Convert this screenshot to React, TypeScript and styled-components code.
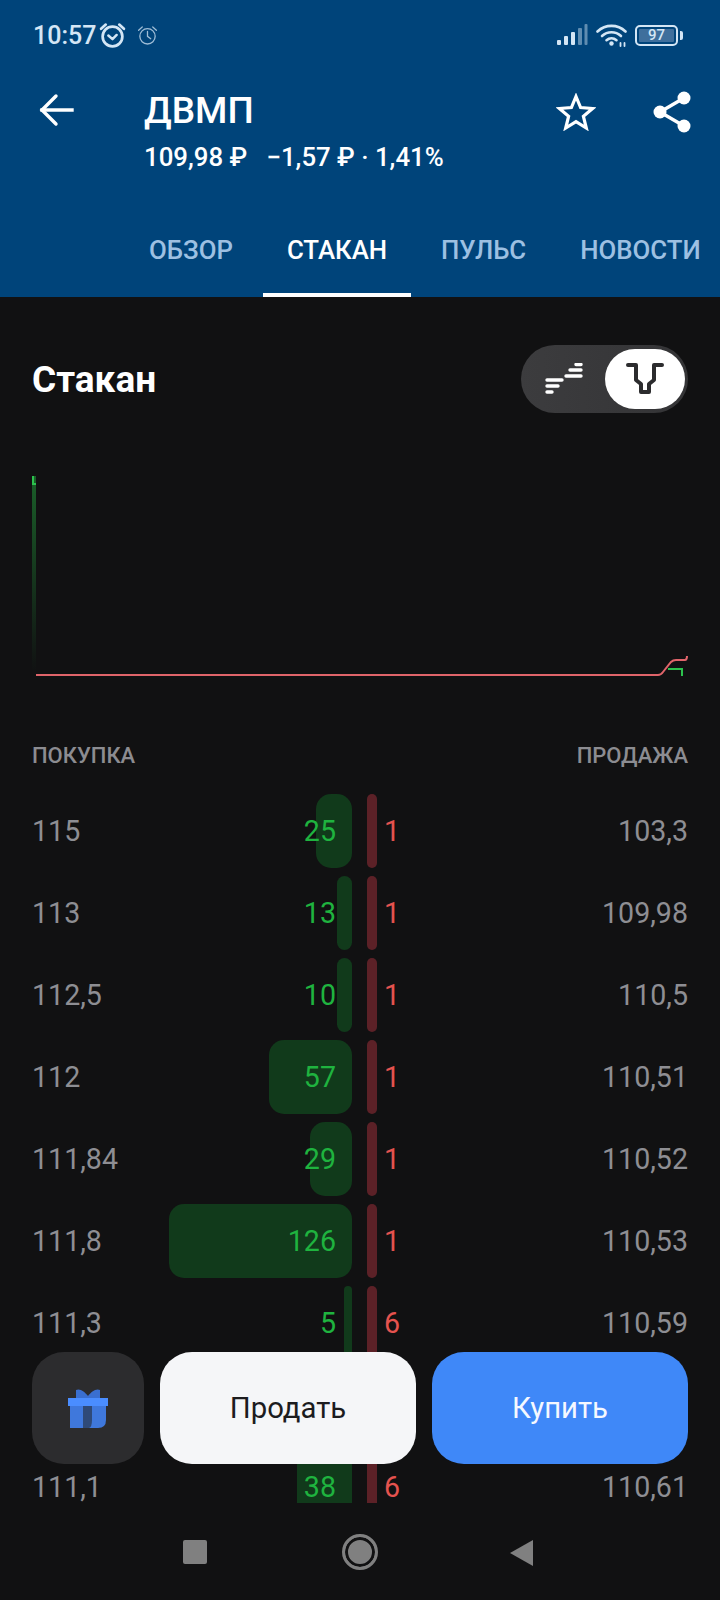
import React from "react";
import styled, { createGlobalStyle } from "styled-components";

const GlobalStyle = createGlobalStyle`
  html, body {
    margin: 0;
    padding: 0;
    background: #111112;
    font-family: "Roboto", "Liberation Sans", sans-serif;
  }
  * { box-sizing: border-box; }
`;

const Screen = styled.div`
  width: 720px;
  height: 1600px;
  display: flex;
  flex-direction: column;
  overflow: hidden;
  background: #111112;
`;

const Header = styled.header`
  height: 297px;
  flex: none;
  background: #00447a;
  display: flex;
  flex-direction: column;
`;

const StatusBar = styled.div`
  height: 70px;
  padding: 0 38px 0 33px;
  display: flex;
  align-items: center;
  color: #d4e6f5;
`;

const Clock = styled.span`
  font-size: 25px;
  font-weight: 500;
  margin-right: 3px;
`;

const AlarmGap = styled.span`
  width: 11px;
`;

const StatusRight = styled.div`
  margin-left: auto;
  display: flex;
  align-items: center;
  gap: 8px;
`;

const TitleBar = styled.div`
  height: 90px;
  display: flex;
  align-items: flex-start;
  color: #fff;
`;

const BackSlot = styled.div`
  width: 144px;
  padding: 23px 0 0 39px;
  flex: none;
`;

const TitleBlock = styled.div`
  flex: 1;
  padding-top: 19px;
`;

const Title = styled.div`
  font-size: 37px;
  font-weight: 500;
  line-height: 44px;
`;

const Subtitle = styled.div`
  font-size: 25.8px;
  font-weight: 500;
  line-height: 30px;
  margin-top: 9px;
  white-space: pre;
`;

const Actions = styled.div`
  display: flex;
  align-items: center;
  gap: 57px;
  padding: 21px 29px 0 0;
`;

const Tabs = styled.nav`
  margin-top: auto;
  height: 72px;
  padding-left: 125px;
  display: flex;
  gap: 6px;
`;

const Tab = styled.div<{ $active?: boolean }>`
  padding: 0 24px 19px;
  display: flex;
  align-items: center;
  font-size: 25.8px;
  font-weight: 500;
  white-space: nowrap;
  color: ${({ $active }) => ($active ? "#fff" : "#9dc0e2")};
  border-bottom: 4px solid ${({ $active }) => ($active ? "#fff" : "transparent")};
`;

const Main = styled.main`
  height: 1206px;
  flex: none;
  overflow: hidden;
`;

const SectionHead = styled.div`
  height: 68px;
  margin-top: 48px;
  padding: 0 32px;
  display: flex;
  align-items: center;
  justify-content: space-between;
`;

const SectionTitle = styled.h2`
  margin: 0;
  font-size: 37px;
  font-weight: 700;
  color: #fff;
`;

const Toggle = styled.div`
  width: 167px;
  height: 68px;
  padding: 4px 3px 4px 0;
  border-radius: 34px;
  background: linear-gradient(90deg, #3c3c3e, #343436);
  display: flex;
  align-items: center;
  justify-content: space-between;
`;

const ToggleOff = styled.div`
  width: 84px;
  display: flex;
  justify-content: center;
  padding-left: 2px;
`;

const ToggleThumb = styled.div`
  width: 80px;
  height: 60px;
  border-radius: 30px;
  background: #fff;
  display: flex;
  align-items: center;
  justify-content: center;
`;

const ChartBox = styled.div`
  height: 240px;
  margin-top: 63px;
  svg { display: block; }
`;

const ColumnHeads = styled.div`
  margin-top: 27px;
  height: 24px;
  padding: 0 32px;
  display: flex;
  justify-content: space-between;
  align-items: center;
  font-size: 22px;
  font-weight: 500;
  color: #8c8c91;
`;

const Book = styled.div`
  margin-top: 27px;
  padding: 0 32px;
  display: flex;
  flex-direction: column;
  gap: 8px;
`;

const Row = styled.div`
  height: 74px;
  flex: none;
  display: grid;
  grid-template-columns: 320px 321px;
  column-gap: 15px;
  font-size: 28.6px;
`;

const BuySide = styled.div`
  position: relative;
  display: flex;
  align-items: center;
  justify-content: space-between;
  padding-right: 16px;
`;

const SellSide = styled.div`
  display: flex;
  align-items: center;
`;

const Price = styled.span`
  color: #8e8e93;
`;

const SellPrice = styled(Price)`
  margin-left: auto;
`;

const BuyQty = styled.span`
  position: relative;
  color: #1fb33f;
`;

const SellQty = styled.span`
  color: #e5534f;
  margin-left: 7px;
`;

const BuyBar = styled.div<{ $width: number }>`
  position: absolute;
  top: 0;
  bottom: 0;
  right: 0;
  width: ${({ $width }) => $width}px;
  border-radius: ${({ $width }) => Math.min($width / 2, 15)}px;
  background: #113a1b;
`;

const SellBar = styled.div`
  width: 10px;
  height: 100%;
  flex: none;
  border-radius: 5px;
  background: #5c2127;
`;

const TradeBar = styled.div`
  position: absolute;
  left: 32px;
  top: 1352px;
  width: 656px;
  height: 112px;
  display: grid;
  grid-template-columns: 112px 1fr 1fr;
  gap: 16px;
`;

const GiftButton = styled.div`
  border-radius: 32px;
  background: #2c2c2e;
  display: flex;
  align-items: center;
  justify-content: center;
`;

const TradeButton = styled.div<{ $buy?: boolean }>`
  border-radius: 32px;
  display: flex;
  align-items: center;
  justify-content: center;
  font-size: 29.3px;
  background: ${({ $buy }) => ($buy ? "#3f88f8" : "#f5f6f8")};
  color: ${({ $buy }) => ($buy ? "#f5f8ff" : "#1c1c1e")};
`;

const NavBar = styled.div`
  flex: 1;
  padding: 31px 0 0 183px;
  display: flex;
  align-items: flex-start;
`;

const NavSquare = styled.div`
  width: 24px;
  height: 24px;
  border-radius: 2px;
  background: #808080;
  margin-top: 6px;
`;

const NavHome = styled.div`
  width: 36px;
  height: 36px;
  margin: 0 0 0 135px;
  border-radius: 50%;
  background: #808080;
  border: 3px solid #808080;
  box-shadow: inset 0 0 0 3px #111112;
`;

const NavBack = styled.div`
  margin: 6px 0 0 132px;
  width: 0;
  height: 0;
  border-top: 13px solid transparent;
  border-bottom: 13px solid transparent;
  border-right: 23px solid #808080;
`;

// the eighth row sits behind the trade buttons, only its bars matter
const rows = [
  { id: 1, buy: "115", buyQty: 25, buyWidth: 36, sellQty: 1, sell: "103,3" },
  { id: 2, buy: "113", buyQty: 13, buyWidth: 15, sellQty: 1, sell: "109,98" },
  { id: 3, buy: "112,5", buyQty: 10, buyWidth: 15, sellQty: 1, sell: "110,5" },
  { id: 4, buy: "112", buyQty: 57, buyWidth: 83, sellQty: 1, sell: "110,51" },
  { id: 5, buy: "111,84", buyQty: 29, buyWidth: 42, sellQty: 1, sell: "110,52" },
  { id: 6, buy: "111,8", buyQty: 126, buyWidth: 183, sellQty: 1, sell: "110,53" },
  { id: 7, buy: "111,3", buyQty: 5, buyWidth: 8, sellQty: 6, sell: "110,59" },
  { id: 8, buyWidth: 8 },
  { id: 9, buy: "111,1", buyQty: 38, buyWidth: 55, sellQty: 6, sell: "110,61" },
];

const AlarmIcon = ({ size, dim }: { size: number; dim?: boolean }) => (
  <svg width={size} height={size} viewBox="0 0 26 26" fill="none" stroke="currentColor" opacity={dim ? 0.75 : 1}>
    <circle cx="13" cy="14" r="9.5" strokeWidth={dim ? 1.6 : 2.6} />
    <path d="M2 6.5 6.5 2.5M24 6.5 19.5 2.5" strokeWidth={dim ? 1.6 : 2.6} strokeLinecap="round" />
    {dim ? (
      <path d="M13 8v6l4 3" strokeWidth="1.6" strokeLinecap="round" />
    ) : (
      <path d="M9 13l4 3.5 4-4" strokeWidth="2.4" strokeLinecap="round" strokeLinejoin="round" />
    )}
  </svg>
);

const SignalIcon = () => (
  <svg width="31" height="22" viewBox="0 0 31 22" fill="#d4e6f5">
    <rect x="0" y="16" width="4" height="5" rx="1" />
    <rect x="7" y="12" width="4" height="9" rx="1" />
    <rect x="14" y="8" width="4" height="13" rx="1" />
    <rect x="21" y="4" width="4" height="17" rx="1" opacity="0.45" />
    <rect x="27.5" y="0" width="3" height="21" rx="1" opacity="0.45" />
  </svg>
);

const WifiIcon = () => (
  <svg width="31" height="24" viewBox="0 0 31 24" fill="none" stroke="#d4e6f5" strokeWidth="2.6" strokeLinecap="round">
    <path d="M1.5 8.5C9.5 1 21.5 1 29.5 8.5" />
    <path d="M6 13C11.5 8 19.5 8 25 13" />
    <path d="M10.5 17.2C13.5 14.6 17.5 14.6 20.5 17.2" />
    <circle cx="15.5" cy="20.5" r="2.2" fill="#d4e6f5" stroke="none" />
    <path d="M24.5 20v3M28.5 20v3" strokeWidth="1.8" />
  </svg>
);

const Battery = styled.div`
  position: relative;
  width: 43px;
  height: 21px;
  margin-right: 4px;
  padding: 2px;
  border: 2px solid #d4e6f5;
  border-radius: 5px;
  &::after {
    content: "";
    position: absolute;
    right: -7px;
    top: 4px;
    width: 3px;
    height: 9px;
    border-radius: 0 2px 2px 0;
    background: #d4e6f5;
  }
`;

const BatteryFill = styled.div`
  height: 100%;
  border-radius: 1px;
  background: #3f6f9c;
  color: #d4e6f5;
  font-size: 15px;
  font-weight: 500;
  line-height: 13px;
  text-align: center;
`;

const BackIcon = () => (
  <svg width="36" height="36" viewBox="0 0 36 36" fill="none" stroke="#fff" strokeWidth="3.4" strokeLinecap="square">
    <path d="M3 17h30" />
    <path d="M17 3 3 17l14 14" strokeLinecap="round" strokeLinejoin="miter" />
  </svg>
);

const StarIcon = () => (
  <svg width="40" height="38" viewBox="0 0 40 38" fill="none" stroke="#fff" strokeWidth="3.2" strokeLinejoin="miter">
    <path d="M20 3.5 24.6 14.6 36.6 15.5 27.4 23.3 30.3 35 20 28.7 9.7 35 12.6 23.3 3.4 15.5 15.4 14.6Z" />
  </svg>
);

const ShareIcon = () => (
  <svg width="38" height="42" viewBox="0 0 38 42" fill="#fff" stroke="#fff">
    <circle cx="7" cy="21" r="6.5" stroke="none" />
    <circle cx="31" cy="7" r="6.5" stroke="none" />
    <circle cx="31" cy="35" r="6.5" stroke="none" />
    <path d="M7 21 31 7M7 21l24 14" strokeWidth="3.4" />
  </svg>
);

const BarsIcon = () => (
  <svg width="38" height="32" viewBox="0 0 38 32" fill="none" stroke="#fff" strokeWidth="3.4" strokeLinecap="round">
    <path d="M2 17h15M2 23h11M2 29h5" />
    <path d="M21 13h15M25 7h11M31 1.5h5" />
  </svg>
);

const DepthIcon = () => (
  <svg width="38" height="34" viewBox="0 0 38 34" fill="none" stroke="#2c2c2e" strokeWidth="4" strokeLinecap="round" strokeLinejoin="round">
    <path d="M2 3h8v15l5 4v8h8v-8l5-4V3h8" />
  </svg>
);

const GiftIcon = () => (
  <svg width="40" height="42" viewBox="0 0 40 42">
    <path d="M8 3c4-2 9 2 12 6 3-4 8-8 12-6v9H8Z" fill="#3a6fd0" />
    <rect x="0" y="11" width="40" height="8" fill="#4a8dff" />
    <rect x="2" y="19" width="15" height="22" fill="#3f78dc" />
    <rect x="15" y="19" width="9" height="22" fill="#2f4a78" />
    <path d="M24 19h14v14q0 8-8 8h-9q3-1 3-8Z" fill="#3f78dc" />
  </svg>
);

const DepthChart = () => (
  <svg width="720" height="240" viewBox="0 0 720 240" fill="none">
    <defs>
      <linearGradient id="bidFade" x1="0" y1="0" x2="0" y2="1">
        <stop offset="0" stopColor="#1a5f29" />
        <stop offset="1" stopColor="#1a5f29" stopOpacity="0" />
      </linearGradient>
    </defs>
    <rect x="32" y="0" width="4" height="196" fill="url(#bidFade)" />
    <path d="M33 0v8h3" stroke="#2cc24d" strokeWidth="2" />
    <path d="M668 193h14v7" stroke="#2cc24d" strokeWidth="2" />
    <path d="M36 199H658q3 0 5-3l8-10q2-2 5-2h9q2 0 2-4" stroke="#e0646a" strokeWidth="2" />
  </svg>
);

export default function App() {
  return (
    <Screen>
      <GlobalStyle />
      <Header>
        <StatusBar>
          <Clock>10:57</Clock>
          <AlarmIcon size={27} />
          <AlarmGap />
          <AlarmIcon size={21} dim />
          <StatusRight>
            <SignalIcon />
            <WifiIcon />
            <Battery>
              <BatteryFill>97</BatteryFill>
            </Battery>
          </StatusRight>
        </StatusBar>
        <TitleBar>
          <BackSlot>
            <BackIcon />
          </BackSlot>
          <TitleBlock>
            <Title>ДВМП</Title>
            <Subtitle>109,98 ₽   −1,57 ₽ · 1,41%</Subtitle>
          </TitleBlock>
          <Actions>
            <StarIcon />
            <ShareIcon />
          </Actions>
        </TitleBar>
        <Tabs>
          <Tab>ОБЗОР</Tab>
          <Tab $active>СТАКАН</Tab>
          <Tab>ПУЛЬС</Tab>
          <Tab>НОВОСТИ</Tab>
        </Tabs>
      </Header>
      <Main>
        <SectionHead>
          <SectionTitle>Стакан</SectionTitle>
          <Toggle>
            <ToggleOff>
              <BarsIcon />
            </ToggleOff>
            <ToggleThumb>
              <DepthIcon />
            </ToggleThumb>
          </Toggle>
        </SectionHead>
        <ChartBox>
          <DepthChart />
        </ChartBox>
        <ColumnHeads>
          <span>ПОКУПКА</span>
          <span>ПРОДАЖА</span>
        </ColumnHeads>
        <Book>
          {rows.map((r) => (
            <Row key={r.id}>
              <BuySide>
                <Price>{r.buy}</Price>
                <BuyBar $width={r.buyWidth} />
                <BuyQty>{r.buyQty}</BuyQty>
              </BuySide>
              <SellSide>
                <SellBar />
                <SellQty>{r.sellQty}</SellQty>
                <SellPrice>{r.sell}</SellPrice>
              </SellSide>
            </Row>
          ))}
        </Book>
      </Main>
      <TradeBar>
        <GiftButton>
          <GiftIcon />
        </GiftButton>
        <TradeButton>Продать</TradeButton>
        <TradeButton $buy>Купить</TradeButton>
      </TradeBar>
      <NavBar>
        <NavSquare />
        <NavHome />
        <NavBack />
      </NavBar>
    </Screen>
  );
}
